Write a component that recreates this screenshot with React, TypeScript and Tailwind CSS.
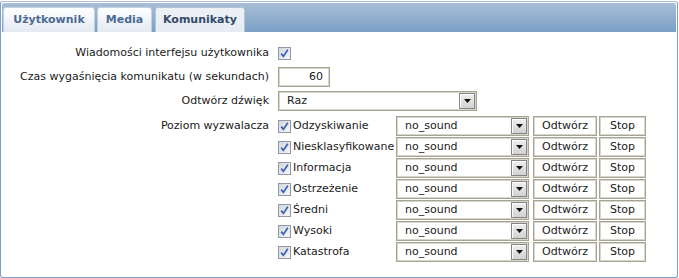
import React from 'react';

const levels = [
  'Odzyskiwanie',
  'Niesklasyfikowane',
  'Informacja',
  'Ostrzeżenie',
  'Średni',
  'Wysoki',
  'Katastrofa',
];

const Check: React.FC = () => (
  <span className="flex h-[13px] w-[13px] shrink-0 items-center justify-center border border-[#8e98a6] bg-gradient-to-br from-[#d3d7dd] to-[#f5f6f8]">
    <svg width="9" height="9" viewBox="0 0 9 9">
      <path d="M1.2 4.6 L3.4 7.4 L7.8 0.8" stroke="#3a60b2" strokeWidth="1.7" fill="none" />
    </svg>
  </span>
);

const Arrow: React.FC = () => (
  <span className="mr-px ml-auto flex h-[16px] w-[16px] items-center justify-center border border-[#858585] bg-gradient-to-b from-[#efefef] to-[#d2d2d2] shadow-[inset_1px_1px_0_#ffffff]">
    <svg width="7" height="4" viewBox="0 0 7 4">
      <path d="M0 0 H7 L3.5 4 Z" fill="#111" />
    </svg>
  </span>
);

const Select: React.FC<{ value: string; className: string }> = ({ value, className }) => (
  <div
    className={
      'flex h-[20px] items-center border border-[#a6a494] bg-white pl-[8px] shadow-[inset_0_0_0_1px_#d8d6cb] ' +
      className
    }
  >
    <span>{value}</span>
    <Arrow />
  </div>
);

const Button: React.FC<{ label: string; className: string }> = ({ label, className }) => (
  <div
    className={
      'flex h-[20px] items-center justify-center border border-[#a6a494] bg-white shadow-[inset_0_0_0_1px_#d8d6cb] ' +
      className
    }
  >
    {label}
  </div>
);

export default function App() {
  return (
    <div className="h-[278px] w-[679px] bg-white pt-px text-[11px] text-[#1a1a1a]" style={{ fontFamily: '"DejaVu Sans", Verdana, sans-serif' }}>
      <div className="h-[277px] w-[678px] rounded-[3px] border border-[#7d9ec4] border-t-[#a9bdd4] bg-white p-px">
        {/* Tab bar */}
        <div className="flex h-[29px] items-end gap-[2px] rounded-t-[2px] bg-gradient-to-b from-[#a9bed6] to-[#7aa0c5] pl-px">
          <div className="flex h-[25px] w-[92px] items-center justify-center rounded-t-[3px] border border-b-0 border-[#c3d1e1] bg-gradient-to-b from-[#ffffff] to-[#e3eaf2] font-bold text-[#4c6a93]">
            Użytkownik
          </div>
          <div className="flex h-[25px] w-[55px] items-center justify-center rounded-t-[3px] border border-b-0 border-[#c3d1e1] bg-gradient-to-b from-[#ffffff] to-[#e3eaf2] font-bold text-[#4c6a93]">
            Media
          </div>
          <div className="ml-px flex h-[25px] w-[90px] items-center justify-center rounded-t-[3px] border border-b-0 border-[#b3c4d8] bg-gradient-to-b from-[#edf1f6] to-[#e6ecf3] font-bold text-[#33496b]">
            Komunikaty
          </div>
        </div>

        {/* Form */}
        <div className="grid grid-cols-[267px_1fr] gap-x-[9px] pt-[11px]">
          <div className="flex h-[21px] items-center justify-end">Wiadomości interfejsu użytkownika</div>
          <div className="flex h-[21px] items-center">
            <Check />
          </div>

          <div className="mt-[3px] flex h-[20px] items-center justify-end">Czas wygaśnięcia komunikatu (w sekundach)</div>
          <div className="mt-[3px] flex">
            <div className="flex h-[20px] w-[52px] items-center justify-end border border-[#a6a494] bg-white pr-[6px] shadow-[inset_0_0_0_1px_#d8d6cb]">
              60
            </div>
          </div>

          <div className="mt-[4px] flex h-[20px] items-center justify-end">Odtwórz dźwięk</div>
          <div className="mt-[4px] flex">
            <Select value="Raz" className="w-[199px]" />
          </div>

          <div className="mt-[5px] flex h-[20px] items-center justify-end">Poziom wyzwalacza</div>
          <div className="mt-[5px] flex flex-col gap-px">
            {levels.map((l) => (
              <div key={l} className="flex h-[20px] items-center">
                <div className="flex w-[118px] items-center gap-[2px]">
                  <Check />
                  <span className="whitespace-nowrap">{l}</span>
                </div>
                <Select value="no_sound" className="w-[133px]" />
                <Button label="Odtwórz" className="ml-[4px] w-[64px]" />
                <Button label="Stop" className="ml-[2px] w-[47px]" />
              </div>
            ))}
          </div>
        </div>
      </div>
    </div>
  );
}
